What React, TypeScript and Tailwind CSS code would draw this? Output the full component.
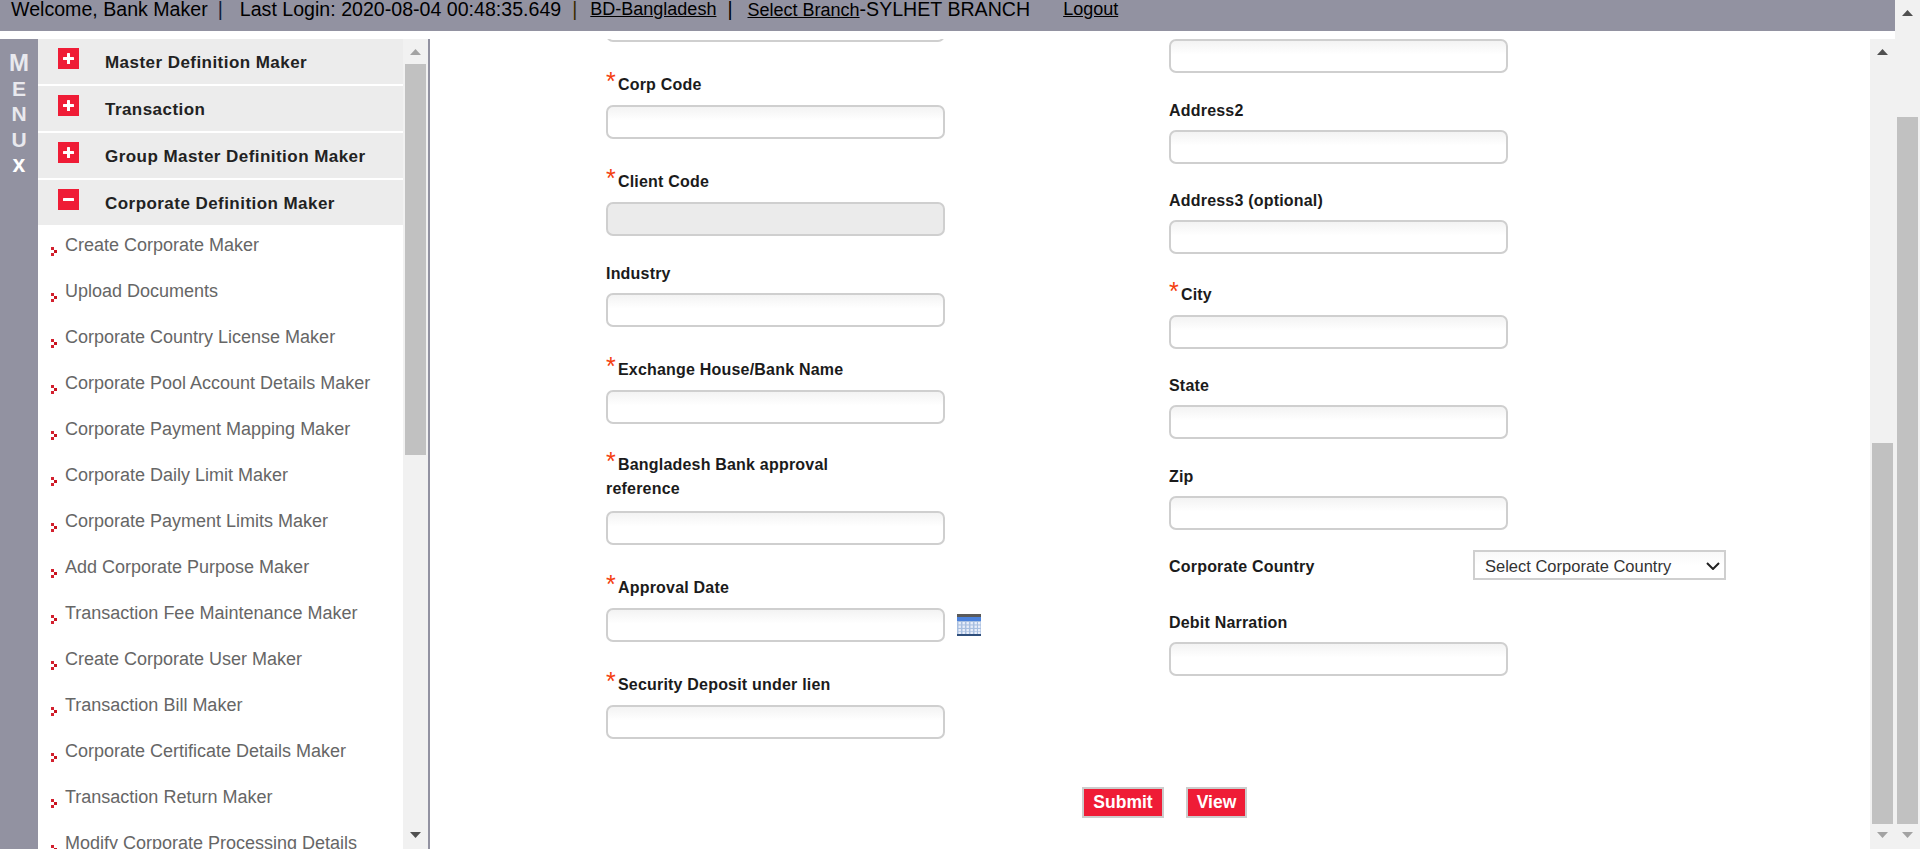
import React from "react";

const menuHeads = [
  { t: "Master Definition Maker", open: false },
  { t: "Transaction", open: false },
  { t: "Group Master Definition Maker", open: false },
  { t: "Corporate Definition Maker", open: true },
];
const items = [
  "Create Corporate Maker",
  "Upload Documents",
  "Corporate Country License Maker",
  "Corporate Pool Account Details Maker",
  "Corporate Payment Mapping Maker",
  "Corporate Daily Limit Maker",
  "Corporate Payment Limits Maker",
  "Add Corporate Purpose Maker",
  "Transaction Fee Maintenance Maker",
  "Create Corporate User Maker",
  "Transaction Bill Maker",
  "Corporate Certificate Details Maker",
  "Transaction Return Maker",
  "Modify Corporate Processing Details",
];

function Arrow({ up, dark }: { up?: boolean; dark?: boolean }) {
  return (
    <svg width="11" height="6" viewBox="0 0 11 6" className="block">
      <polygon points={up ? "5.5,0 11,6 0,6" : "0,0 11,0 5.5,6"} fill={dark ? "#505050" : "#a3a3a3"} />
    </svg>
  );
}

function Scrollbar({
  topDark,
  bottomDark,
  spacerClass,
  thumbClass,
  topClass,
}: {
  topDark?: boolean;
  bottomDark?: boolean;
  spacerClass: string;
  thumbClass: string;
  topClass: string;
}) {
  return (
    <div className="w-[25px] shrink-0 bg-[#f1f1f1] flex flex-col items-center">
      <div className={"w-full flex justify-center " + topClass}>
        <Arrow up dark={topDark} />
      </div>
      <div className={spacerClass} />
      <div className={"w-[21px] bg-[#c1c1c1] " + thumbClass} />
      <div className="flex-1" />
      <div className="h-[25px] w-full flex justify-center pt-[8px]">
        <Arrow dark={bottomDark} />
      </div>
    </div>
  );
}

function Box({ open }: { open: boolean }) {
  return (
    <span className="w-[21px] h-[21px] bg-[#ef1c36] flex items-center justify-center shrink-0 mt-[9px]">
      <svg width="13" height="13" viewBox="0 0 13 13">
        <rect x="1" y="5" width="11" height="3" fill="#fff" rx="0.5" />
        {!open && <rect x="5" y="1" width="3" height="11" fill="#fff" rx="0.5" />}
      </svg>
    </span>
  );
}

function Bullet() {
  return (
    <svg width="6" height="9" viewBox="0 0 6 9" className="shrink-0 mt-[13px]">
      <rect x="0" y="0" width="3" height="3" fill="#d3212f" />
      <rect x="3" y="3" width="3" height="3" fill="#c8141f" />
      <rect x="0" y="6" width="3" height="3" fill="#d3212f" />
    </svg>
  );
}

function Label({ children, star, wrapClass }: { children: React.ReactNode; star?: boolean; wrapClass?: string }) {
  return (
    <div
      className={
        "text-[16px] leading-[20px] font-bold text-[#1b1b1b] tracking-[0.2px] " +
        (star ? "mb-[10px] " : "pt-[1px] mb-[9px] ") +
        (wrapClass || "")
      }
    >
      {star && <span className="text-[#f4400f] text-[25px] leading-[0] font-normal mr-[2px]">*</span>}
      {children}
    </div>
  );
}

const inputClass =
  "block w-[339px] h-[34px] border-2 border-[#cfcfcf] rounded-[7px] bg-[linear-gradient(#f3f3f3,#ffffff_45%)]";

function CalendarIcon() {
  return (
    <svg width="24" height="22" viewBox="0 0 24 22" className="ml-[12px] shrink-0">
      <rect width="24" height="22" fill="#3f6fb5" />
      <rect width="24" height="3" fill="#5a5a5a" />
      <rect y="3" width="24" height="4" fill="#4c82dc" />
      <rect y="7" width="24" height="15" fill="#a8bfe0" />
      {[8, 11.5, 15, 18].map((y) => (
        <g key={y}>
          {[1.5, 5.5, 9.5, 13.5, 17.5, 21].map((x) => (
            <rect key={x} x={x} y={y} width="2.4" height="2.4" fill="#e8eefa" />
          ))}
        </g>
      ))}
      <rect y="20" width="24" height="2" fill="#2f4f7c" />
    </svg>
  );
}

export default function App() {
  const f = { fontFamily: '"Liberation Sans", Arial, sans-serif' };
  return (
    <div className="flex w-[1920px] h-[849px] overflow-hidden bg-white" style={f}>
      <div className="flex-1 min-w-0 flex flex-col">
        <header className="h-[31px] shrink-0 bg-[#9292a1] pl-[11px] flex items-start text-[19.6px] leading-[18px] text-black whitespace-nowrap overflow-hidden">
          <span>Welcome, Bank Maker</span>
          <span className="ml-[10px] text-[#10203a]">|</span>
          <span className="ml-[17px]">Last Login: 2020-08-04 00:48:35.649</span>
          <span className="ml-[11px] text-[#3a2a00]">|</span>
          <span className="ml-[13px] underline text-[18px]">BD-Bangladesh</span>
          <span className="ml-[11px]">|</span>
          <span className="ml-[15px]"><span className="underline text-[18px]">Select Branch</span>-SYLHET BRANCH</span>
          <span className="ml-[33px] underline text-[18px]">Logout</span>
        </header>
        <div className="h-[8px] shrink-0" />
        <div className="flex-1 min-h-0 flex">
          <aside className="w-[38px] shrink-0 bg-[#9292a1] flex flex-col items-center pt-[11px] text-[#e9e9ee] text-[21px] leading-[25.5px] font-bold">
            <span className="text-[24px]">M</span>
            <span>E</span>
            <span>N</span>
            <span>U</span>
            <span className="text-white text-[23px]">x</span>
          </aside>
          <nav className="w-[365px] shrink-0 overflow-hidden flex flex-col">
            {menuHeads.map((m) => (
              <div key={m.t} className="h-[45px] shrink-0 mb-[2px] bg-[#ececec] flex pl-[20px]">
                <Box open={m.open} />
                <span className="ml-[26px] mt-[14px] text-[17px] leading-[20px] tracking-[0.45px] font-bold text-[#222]">{m.t}</span>
              </div>
            ))}
            <div className="-mt-[2px]">
              {items.map((i) => (
                <div key={i} className="h-[46px] flex pl-[13px] pt-[9px]">
                  <Bullet />
                  <span className="ml-[8px] text-[18px] leading-[22px] text-[#666] whitespace-nowrap">{i}</span>
                </div>
              ))}
            </div>
          </nav>
          <Scrollbar
            bottomDark
            spacerClass="h-0"
            thumbClass="h-[391px]"
            topClass="h-[25px] pt-[10px]"
          />
          <div className="w-[2px] shrink-0 bg-[#9292a1]" />
          <main className="flex-1 min-w-0 overflow-hidden">
            <div className="flex pl-[176px]">
              <div className="w-[563px] shrink-0 -mt-[31px]">
                <input className={inputClass} />
                <div className="mt-[33px]"><Label star>Corp Code</Label><input className={inputClass} /></div>
                <div className="mt-[33px]"><Label star>Client Code</Label><input disabled className={inputClass + " bg-none bg-[#ebebeb]"} /></div>
                <div className="mt-[27px]"><Label>Industry</Label><input className={inputClass} /></div>
                <div className="mt-[33px]"><Label star>Exchange House/Bank Name</Label><input className={inputClass} /></div>
                <div className="mt-[29px]"><Label star wrapClass="w-[240px] leading-[24px]">Bangladesh Bank approval reference</Label><input className={inputClass} /></div>
                <div className="mt-[33px]">
                  <Label star>Approval Date</Label>
                  <div className="flex items-center"><input className={inputClass} /><CalendarIcon /></div>
                </div>
                <div className="mt-[33px]"><Label star>Security Deposit under lien</Label><input className={inputClass} /></div>
              </div>
              <div className="flex-1 min-w-0">
                <input className={inputClass} />
                <div className="mt-[27px]"><Label>Address2</Label><input className={inputClass} /></div>
                <div className="mt-[26px]"><Label>Address3 (optional)</Label><input className={inputClass} /></div>
                <div className="mt-[31px]"><Label star>City</Label><input className={inputClass} /></div>
                <div className="mt-[26px]"><Label>State</Label><input className={inputClass} /></div>
                <div className="mt-[27px]"><Label>Zip</Label><input className={inputClass} /></div>
                <div className="mt-[20px] flex items-center">
                  <span className="w-[304px] pt-[3px] text-[16px] font-bold text-[#1b1b1b] tracking-[0.2px]">Corporate Country</span>
                  <div className="relative w-[253px] h-[30px]">
                    <select className="appearance-none block w-full h-full border-2 border-[#cfcfcf] bg-[linear-gradient(#f8f8f8,#ffffff_50%)] text-[16.5px] text-[#333] pl-[10px] pt-[2px]">
                      <option>Select Corporate Country</option>
                    </select>
                    <svg width="14" height="8" viewBox="0 0 14 8" className="absolute right-[6px] top-[12px] pointer-events-none">
                      <polyline points="1,1 7,7 13,1" fill="none" stroke="#222" strokeWidth="2" />
                    </svg>
                  </div>
                </div>
                <div className="mt-[32px]"><Label>Debit Narration</Label><input className={inputClass} /></div>
              </div>
            </div>
            <div className="flex pl-[652px] mt-[48px] gap-[22px]">
              <button className="h-[31px] w-[82px] border-2 border-[#cccccc] bg-[#ef1c36] text-white font-bold text-[17.5px] leading-none">Submit</button>
              <button className="h-[31px] w-[61px] border-2 border-[#cccccc] bg-[#ef1c36] text-white font-bold text-[17.5px] leading-none">View</button>
            </div>
          </main>
          <Scrollbar
            topDark
            spacerClass="h-[379px]"
            thumbClass="h-[381px]"
            topClass="h-[25px] pt-[10px]"
          />
        </div>
      </div>
      <Scrollbar
        topDark
        spacerClass="h-[92px]"
        thumbClass="h-[707px]"
        topClass="h-[25px] pt-[10px]"
      />
    </div>
  );
}
